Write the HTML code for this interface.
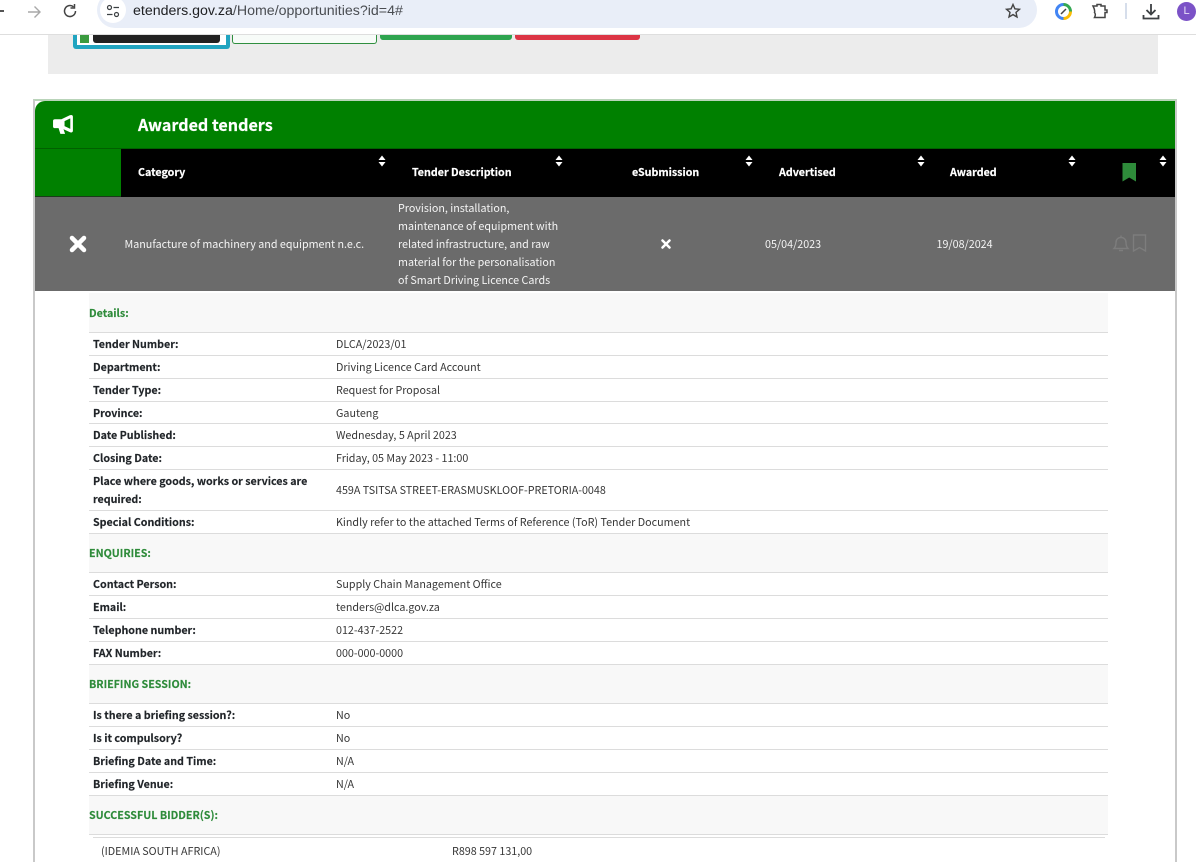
<!DOCTYPE html>
<html lang="en"><head><meta charset="utf-8"><title>eTenders</title>
<style>
html,body{margin:0;padding:0;width:1196px;height:862px;overflow:hidden;background:#fff}
body{position:relative;font-family:"Noto Sans CJK JP","Liberation Sans",sans-serif;font-size:10.740px;color:#212529}
div,span.a,svg{position:absolute}
.t{line-height:18px;white-space:nowrap;height:18px;margin-top:.5px}
.t.w,.t.v{margin-top:1px}
.b{font-weight:700;color:#212529;font-size:10.700px;-webkit-text-stroke:.15px #212529}
.v{color:#363636;left:336px}
.l{left:93px}
.s{left:89px;color:#2e8b3a;font-weight:700;font-size:10.700px;-webkit-text-stroke:.15px #2e8b3a}
.h{color:#fff;font-weight:700;font-size:10.700px;-webkit-text-stroke:.2px #fff}
.w{color:#f5f5f5}
.line{left:89px;width:1019px;height:1px;background:#dcdcdc}
.sec{left:89px;width:1019px;background:#f8f8f8}
.sort{width:8px;height:12px}
</style></head><body>
<!-- page content -->
<div style="left:48px;top:35px;width:1110px;height:39px;background:#ececec"></div>
<div style="left:73px;top:30px;width:157px;height:19px;background:#20a4c0;border-radius:0 0 3px 3px"></div>
<div style="left:77px;top:30px;width:149px;height:15px;background:#fff"></div>
<div style="left:80px;top:35px;width:9px;height:8px;background:#3a9a3f"></div>
<div style="left:93px;top:30px;width:127px;height:13px;background:#212121;border-radius:0 0 3px 3px"></div>
<div style="left:232px;top:30px;width:143px;height:13px;background:#f7fbf8;border:1px solid #2f8f3f;border-top:0;border-radius:0 0 3px 3px"></div>
<div style="left:380px;top:30px;width:132px;height:10px;background:#2ea44f;border-radius:0 0 3px 3px"></div>
<div style="left:515px;top:30px;width:125px;height:10px;background:#dc3545;border-radius:0 0 3px 3px"></div>

<!-- panel -->
<div style="left:33px;top:99px;height:780px;border:2px solid #c9c9c9;border-top-color:#b9d4b9;box-sizing:content-box;width:1140px"></div>
<div style="left:35px;top:101px;width:1140px;height:48px;background:#008000;border-radius:10px 0 0 0"></div>
<svg style="left:52px;top:114px" width="23" height="21" viewBox="0 0 22 20"><path d="M1 6.500C1 5.500 1.800 5 2.800 5H9L17 1.200C18.500.5 20 1 20 2.500V16C20 17.500 18.500 18 17 17.300L11 14.500 12.500 19H8L6.300 13.500H2.800C1.800 13.500 1 13 1 12Z" fill="#fff"/><path d="M17.500 4.200V14.200L12 11.500V6.800Z" fill="#008000"/></svg>
<div class="t h" style="left:138px;top:112.500px;font-size:16.100px;line-height:22px;height:22px">Awarded tenders</div>
<div style="left:35px;top:149px;width:86px;height:47px;background:#008000"></div>
<div style="left:121px;top:149px;width:1054px;height:48px;background:#000"></div>
<div style="left:35px;top:196px;width:86px;height:1px;background:#1c3a1c"></div>
<div style="left:35px;top:148px;width:1140px;height:1px;background:#006000"></div>
<div class="t h" style="left:138px;top:163px">Category</div>
<div class="t h" style="left:412px;top:163px">Tender Description</div>
<div class="t h" style="left:632px;top:163px">eSubmission</div>
<div class="t h" style="left:779px;top:163px">Advertised</div>
<div class="t h" style="left:950px;top:163px">Awarded</div>
<svg class="sort" style="left:378px;top:155px" viewBox="0 0 8 12"><path d="M4 .5 7.500 5H.5ZM4 11.500 7.500 7H.5Z" fill="#fff"/></svg>
<svg class="sort" style="left:555px;top:155px" viewBox="0 0 8 12"><path d="M4 .5 7.500 5H.5ZM4 11.500 7.500 7H.5Z" fill="#fff"/></svg>
<svg class="sort" style="left:745px;top:155px" viewBox="0 0 8 12"><path d="M4 .5 7.500 5H.5ZM4 11.500 7.500 7H.5Z" fill="#fff"/></svg>
<svg class="sort" style="left:917px;top:155px" viewBox="0 0 8 12"><path d="M4 .5 7.500 5H.5ZM4 11.500 7.500 7H.5Z" fill="#fff"/></svg>
<svg class="sort" style="left:1068px;top:155px" viewBox="0 0 8 12"><path d="M4 .5 7.500 5H.5ZM4 11.500 7.500 7H.5Z" fill="#fff"/></svg>
<svg class="sort" style="left:1159px;top:155px" viewBox="0 0 8 12"><path d="M4 .5 7.500 5H.5ZM4 11.500 7.500 7H.5Z" fill="#fff"/></svg>
<svg style="left:1122px;top:163px" width="15" height="19" viewBox="0 0 15 19"><path d="M.5 0H14V18.500L7.200 14.500.5 18.500Z" fill="#2e8b3a"/></svg>

<!-- row -->
<div style="left:35px;top:197px;width:1140px;height:94px;background:#6b6b6b"></div>
<svg style="left:69px;top:235px" width="18" height="18" viewBox="0 0 18 18"><path d="M3 3 15 15M15 3 3 15" stroke="#fff" stroke-width="4.500" stroke-linecap="round"/></svg>
<div class="t w" style="left:124.500px;top:235px">Manufacture of machinery and equipment n.e.c.</div>
<div class="t w" style="left:398px;top:199px">Provision, installation,</div>
<div class="t w" style="left:398px;top:217px">maintenance of equipment with</div>
<div class="t w" style="left:398px;top:235px">related infrastructure, and raw</div>
<div class="t w" style="left:398px;top:253px">material for the personalisation</div>
<div class="t w" style="left:398px;top:271px">of Smart Driving Licence Cards</div>
<svg style="left:661px;top:239px" width="10" height="10" viewBox="0 0 10 10"><path d="M1.500 1.500 8.500 8.500M8.500 1.500 1.500 8.500" stroke="#fff" stroke-width="2.500" stroke-linecap="round"/></svg>
<div class="t w" style="left:765px;top:235px">05/04/2023</div>
<div class="t w" style="left:936.500px;top:235px">19/08/2024</div>
<svg style="left:1112px;top:234px" width="18" height="19" viewBox="0 0 18 19" fill="none" stroke="#7d7d7d" stroke-width="1.400"><path d="M2 14.500C3.500 13 4 11.500 4 8.500 4 5.500 6 3.500 9 3.500S14 5.500 14 8.500C14 11.500 14.500 13 16 14.500ZM9 1.500V3.500M7 16.500H11"/></svg>
<svg style="left:1132px;top:234px" width="15" height="18" viewBox="0 0 15 18" fill="none" stroke="#7d7d7d" stroke-width="1.400"><path d="M1.500 1H13.500V17L7.500 13.500 1.500 17Z"/></svg>

<!-- detail sections -->
<div class="sec" style="top:293px;height:39px"></div>
<div class="sec" style="top:533px;height:39px"></div>
<div class="sec" style="top:664px;height:39px"></div>
<div class="sec" style="top:795px;height:39px"></div>
<div class="line" style="top:332px"></div><div class="line" style="top:355px"></div><div class="line" style="top:378px"></div><div class="line" style="top:401px"></div><div class="line" style="top:423px"></div><div class="line" style="top:446px"></div><div class="line" style="top:469px"></div><div class="line" style="top:510px"></div><div class="line" style="top:533px"></div><div class="line" style="top:572px"></div><div class="line" style="top:595px"></div><div class="line" style="top:618px"></div><div class="line" style="top:641px"></div><div class="line" style="top:664px"></div><div class="line" style="top:703px"></div><div class="line" style="top:726px"></div><div class="line" style="top:749px"></div><div class="line" style="top:772px"></div><div class="line" style="top:795px"></div><div class="line" style="top:834px"></div><div class="line" style="top:837px;left:93px;width:1012px"></div>

<div class="t s" style="top:304px">Details:</div>
<div class="t b l" style="top:335px">Tender Number:</div><div class="t v" style="top:335px">DLCA/2023/01</div>
<div class="t b l" style="top:358px">Department:</div><div class="t v" style="top:358px">Driving Licence Card Account</div>
<div class="t b l" style="top:381px">Tender Type:</div><div class="t v" style="top:381px">Request for Proposal</div>
<div class="t b l" style="top:404px">Province:</div><div class="t v" style="top:404px">Gauteng</div>
<div class="t b l" style="top:426px">Date Published:</div><div class="t v" style="top:426px">Wednesday, 5 April 2023</div>
<div class="t b l" style="top:449px">Closing Date:</div><div class="t v" style="top:449px">Friday, 05 May 2023 - 11:00</div>
<div class="t b l" style="top:472px">Place where goods, works or services are</div>
<div class="t b l" style="top:490px">required:</div><div class="t v" style="top:481px">459A TSITSA STREET-ERASMUSKLOOF-PRETORIA-0048</div>
<div class="t b l" style="top:513px">Special Conditions:</div><div class="t v" style="top:513px">Kindly refer to the attached Terms of Reference (ToR) Tender Document</div>
<div class="t s" style="top:544px">ENQUIRIES:</div>
<div class="t b l" style="top:575px">Contact Person:</div><div class="t v" style="top:575px">Supply Chain Management Office</div>
<div class="t b l" style="top:598px">Email:</div><div class="t v" style="top:598px">tenders@dlca.gov.za</div>
<div class="t b l" style="top:621px">Telephone number:</div><div class="t v" style="top:621px">012-437-2522</div>
<div class="t b l" style="top:644px">FAX Number:</div><div class="t v" style="top:644px">000-000-0000</div>
<div class="t s" style="top:675px">BRIEFING SESSION:</div>
<div class="t b l" style="top:706px">Is there a briefing session?:</div><div class="t v" style="top:706px">No</div>
<div class="t b l" style="top:729px">Is it compulsory?</div><div class="t v" style="top:729px">No</div>
<div class="t b l" style="top:752px">Briefing Date and Time:</div><div class="t v" style="top:752px">N/A</div>
<div class="t b l" style="top:775px">Briefing Venue:</div><div class="t v" style="top:775px">N/A</div>
<div class="t s" style="top:806px">SUCCESSFUL BIDDER(S):</div>
<div class="t v" style="left:101px;top:842px">(IDEMIA SOUTH AFRICA)</div>
<div class="t v" style="left:452px;top:842px">R898 597 131,00</div>

<!-- browser chrome -->
<div style="left:0;top:0;width:1196px;height:34px;background:#fff"></div>
<div style="left:0;top:34px;width:1196px;height:1px;background:#dedede"></div>
<div style="left:0;top:10px;width:4px;height:1.500px;background:#555"></div>
<svg style="left:26px;top:4px" width="16" height="16" viewBox="0 0 16 16" fill="none" stroke="#a8a8a8" stroke-width="1.400"><path d="M2 8H14M8.500 2.500 14 8 8.500 13.500"/></svg>
<svg style="left:62px;top:3px" width="16" height="16" viewBox="0 0 16 16" fill="none" stroke="#444" stroke-width="1.500"><path d="M13.500 8A5.500 5.500 0 1 1 11.500 3.800M12.500 1V5H8.500"/></svg>
<div style="left:97px;top:-8px;width:940px;height:36px;background:#e9eef8;border-radius:18px"></div>
<div style="left:100px;top:-3px;width:26px;height:26px;background:#fff;border-radius:13px"></div>
<svg style="left:106px;top:4px" width="14" height="14" viewBox="0 0 14 14" fill="none" stroke="#3c4043" stroke-width="1.200"><circle cx="3.500" cy="3.500" r="2"/><path d="M7.500 3.500H13M1 10.500H6.500"/><circle cx="10.500" cy="10.500" r="2"/></svg>
<div style="left:133px;top:0;height:22px;line-height:22px;font-family:'Liberation Sans',sans-serif;font-size:14.200px;color:#4a4d52;white-space:nowrap"><span style="color:#202124">etenders.gov.za</span>/Home/opportunities?id=4#</div>
<svg style="left:1005px;top:3px" width="16" height="16" viewBox="0 0 16 16" fill="none" stroke="#444" stroke-width="1.400"><path d="M8 1.500 9.900 5.800 14.500 6.300 11 9.400 12 14 8 11.600 4 14 5 9.400 1.500 6.300 6.100 5.800Z"/></svg>
<svg style="left:1055px;top:3px" width="17" height="17" viewBox="0 0 17 17" fill="none"><path d="M8.500 1.500A7 7 0 0 1 15.500 8.500" stroke="#34a853" stroke-width="3"/><path d="M15.500 8.500A7 7 0 0 1 8.500 15.500" stroke="#fbbc04" stroke-width="3"/><path d="M8.500 15.500A7 7 0 0 1 1.500 8.500 7 7 0 0 1 8.500 1.500" stroke="#4285f4" stroke-width="3"/><path d="M6 11 11 6" stroke="#444" stroke-width="1.500"/></svg>
<svg style="left:1091px;top:3px" width="18" height="17" viewBox="0 0 18 17" fill="none" stroke="#444" stroke-width="1.500"><path d="M2 3H6V1.500H10V3H14V7H16V9.500H14V14.500H3.500C4.500 12.500 4.500 10.500 3.500 9.500 4 8 3 5 2 3Z"/></svg>
<div style="left:1125px;top:3px;width:2px;height:16px;background:#d6deeb"></div>
<svg style="left:1142px;top:3px" width="18" height="17" viewBox="0 0 18 17" fill="none" stroke="#3c4043" stroke-width="1.800"><path d="M9 1V11M4.500 7 9 11.500 13.500 7M1.500 12V15.500H16.500V12"/></svg>
<div style="left:1177px;top:2px;width:19px;height:19px;border-radius:10px;background:#7b52c7;color:#e8dff8;font-family:'Liberation Sans',sans-serif;font-size:11px;line-height:19px;text-align:center">L</div>
</body></html>
